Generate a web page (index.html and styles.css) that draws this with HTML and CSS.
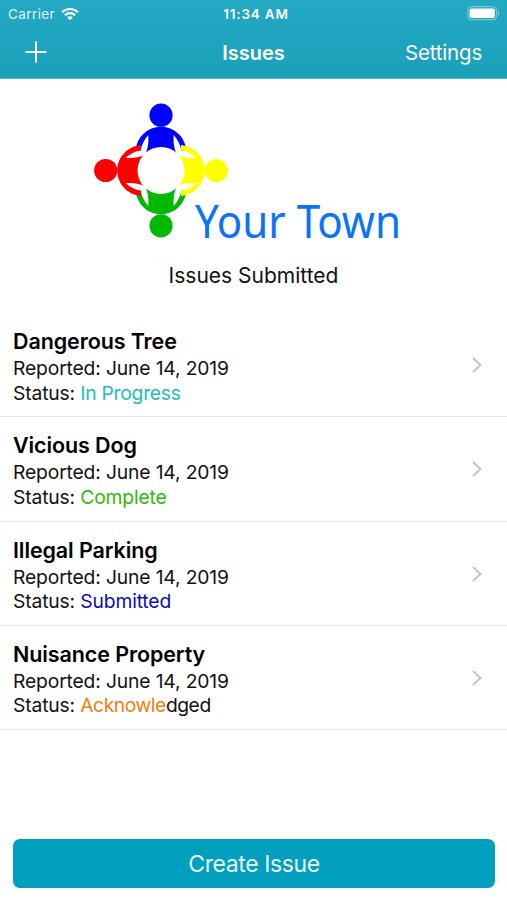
FILE: index.html
```html
<!DOCTYPE html>
<html lang="en">
<head>
<meta charset="utf-8">
<title>Issues</title>
<link rel="stylesheet" href="styles.css">
</head>
<body>
<header class="header">
  <div class="status">
    <div class="carrier"><span>Carrier</span>
      <svg width="18" height="14" viewBox="0 0 18 14" fill="none" stroke="#fff" stroke-width="2.2"><path d="M1 5.2C5.4.9 12.6.9 17 5.2M3.9 8.2c2.8-2.7 7.4-2.7 10.2 0"/><path d="M6 10.3c1.7-1.5 4.3-1.5 6 0L9 13.2z" fill="#fff" stroke="none"/></svg>
    </div>
    <span class="time">11:34 AM</span>
    <svg class="battery" width="33" height="15" viewBox="0 0 33 15"><rect x=".7" y=".7" width="29" height="13" rx="4" fill="none" stroke="#8bd0df" stroke-width="1"/><rect x="2.5" y="2.5" width="25.4" height="9.4" rx="2" fill="#fff"/><path d="M31 5c1.6.8 1.6 3.8 0 4.6z" fill="#8bd0df"/></svg>
  </div>
  <nav class="nav">
    <svg class="plus" width="22" height="22" viewBox="0 0 22 22"><path d="M11 .5v21M.5 11h21" stroke="#fff" stroke-width="2"/></svg>
    <h1 class="title">Issues</h1>
    <span class="settings">Settings</span>
  </nav>
</header>
<main>
  <svg class="logo" width="330" height="170" viewBox="90 95 330 170">
    <defs>
      <g id="person">
        <circle cy="-55.3" r="11.6"/>
        <path d="M-25.5-20C-24-34-13-43.8 0-43.8S24-34 25.5-20H20.3C19.5-26 16.5-31 12.8-35.5C12-28 13-22 16.5-14H-16.5C-13-22-12-28-12.8-35.5C-16.5-31-19.5-26-20.3-20z"/>
      </g>
    </defs>
    <g transform="translate(161 170.5)">
      <use href="#person" class="blue"/>
      <use href="#person" class="green" transform="rotate(180)"/>
      <use href="#person" class="red" transform="rotate(-90)"/>
      <use href="#person" class="yellow" transform="rotate(90)"/>
      <circle r="23.5" fill="#fff"/>
    </g>
    <text class="town" x="195" y="237.5" textLength="206" lengthAdjust="spacingAndGlyphs">Your Town</text>
  </svg>
  <h2 class="subtitle">Issues Submitted</h2>
  <ul class="list">
    <li class="row"><div><h3 class="name">Dangerous Tree</h3><p class="line">Reported: June 14, 2019</p><p class="line">Status: <span class="progress">In Progress</span></p></div><svg class="chevron" width="12" height="18" viewBox="0 0 12 18"><path d="M2 2l7.5 7L2 16"/></svg></li>
    <li class="row"><div><h3 class="name">Vicious Dog</h3><p class="line">Reported: June 14, 2019</p><p class="line">Status: <span class="complete">Complete</span></p></div><svg class="chevron" width="12" height="18" viewBox="0 0 12 18"><path d="M2 2l7.5 7L2 16"/></svg></li>
    <li class="row"><div><h3 class="name">Illegal Parking</h3><p class="line">Reported: June 14, 2019</p><p class="line">Status: <span class="submitted">Submitted</span></p></div><svg class="chevron" width="12" height="18" viewBox="0 0 12 18"><path d="M2 2l7.5 7L2 16"/></svg></li>
    <li class="row"><div><h3 class="name">Nuisance Property</h3><p class="line">Reported: June 14, 2019</p><p class="line">Status: <span class="acknowledged"><span class="highlight">Acknowle</span>dged</span></p></div><svg class="chevron" width="12" height="18" viewBox="0 0 12 18"><path d="M2 2l7.5 7L2 16"/></svg></li>
  </ul>
</main>
<button class="create">Create Issue</button>
</body>
</html>
```
FILE: styles.css
```css
* { box-sizing: border-box; margin: 0; padding: 0; }
body { height: 900px; display: flex; flex-direction: column; background: #fff; color: #111; font-family: Inter, "Liberation Sans", sans-serif; overflow: hidden; }
.header { height: 79px; flex: none; background: linear-gradient(#23a9c3, #1ba0ba); color: #fff; border-bottom: 1px solid #55bacd; }
.status { height: 27px; padding: 0 7px 0 8px; display: grid; grid-template-columns: 1fr auto 1fr; align-items: center; font-size: 13.5px; }
.carrier { display: flex; align-items: center; gap: 6px; letter-spacing: .4px; color: #e2f7fb; }
.time { font-weight: 600; font-size: 13.5px; letter-spacing: .8px; margin-left: 4px; }
.battery { justify-self: end; }
.nav { height: 51px; padding: 0 25px; display: grid; grid-template-columns: 1fr auto 1fr; align-items: center; }
.plus { margin-top: -2px; }
.title { font-size: 20px; font-weight: 600; letter-spacing: 0; }
.settings { justify-self: end; font-size: 20.5px; letter-spacing: -.2px; }
.logo { display: block; margin: 16px 0 -20px 90px; }
.blue { fill: #00f; }
.green { fill: #00b900; }
.red { fill: #f00; }
.yellow { fill: #ff0; }
.town { font-family: "Noto Sans", sans-serif; font-size: 46px; fill: #0b73fa; }
.subtitle { height: 68px; line-height: 62px; text-align: center; font-size: 21px; font-weight: 400; letter-spacing: 0; }
.list { list-style: none; }
.row { height: 104.3px; padding: 15px 24px 0 13px; display: flex; justify-content: space-between; border-bottom: 1px solid #e4e4e4; }
.name { font-size: 21.5px; line-height: 27px; font-weight: 600; letter-spacing: -.1px; margin-bottom: 1px; color: #000; }
.line { font-size: 19.3px; line-height: 24.5px; letter-spacing: -.15px; }
.chevron { margin-top: 28px; fill: none; stroke: #c4c4c7; stroke-width: 2; }
.progress { color: #22bdb6; letter-spacing: -.25px; }
.complete { color: #2dbb05; }
.submitted { color: #0d0bb5; }
.acknowledged { letter-spacing: -.45px; }
.highlight { color: #f57c0b; }
.create { margin: auto 12px 12px 13px; height: 49px; flex: none; border: 0; border-radius: 7px; background: #009fbd; color: #e9faff; font: 400 23px Inter, sans-serif; letter-spacing: -.4px; }
```
